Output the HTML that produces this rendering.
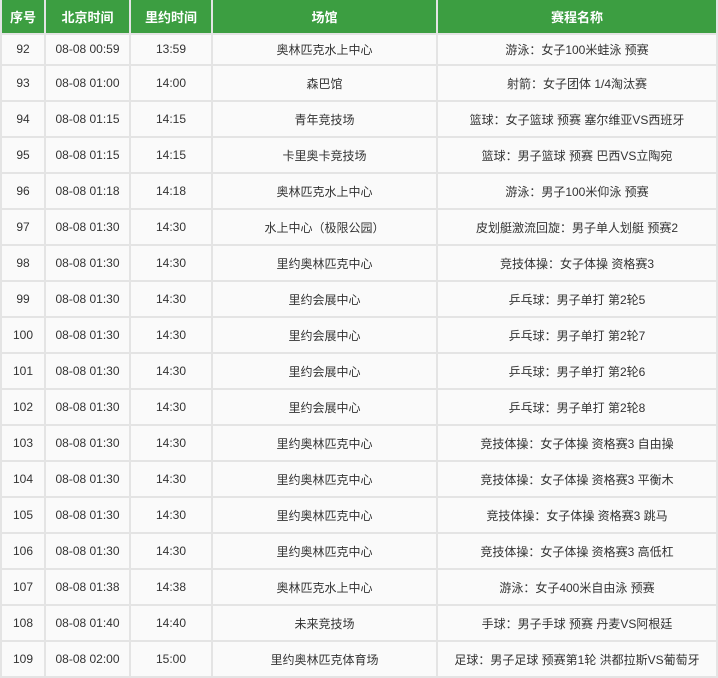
<!DOCTYPE html>
<html><head><meta charset="utf-8"><style>
html,body{margin:0;padding:0;background:#fff;width:718px;height:678px;overflow:hidden}
table{border-collapse:separate;border-spacing:2px;background:#e4e4e4;margin:-2px 0 0 0;table-layout:fixed;width:718px;font-family:"Liberation Sans","Noto Sans CJK SC",sans-serif;font-size:12px;color:#333}
th{background:#3c9e41;color:#fff;font-weight:bold;font-size:13px;height:33px;padding:0;text-align:center}
td{background:#fafafa;height:34px;padding:0;text-align:center;white-space:nowrap}
tr.f td{height:28px;padding-bottom:1px}
</style></head><body>
<table>
<colgroup><col style="width:42px"><col style="width:83px"><col style="width:80px"><col style="width:223px"><col style="width:278px"></colgroup>
<tr><th>序号</th><th>北京时间</th><th>里约时间</th><th>场馆</th><th>赛程名称</th></tr>
<tr class="f"><td>92</td><td>08-08 00:59</td><td>13:59</td><td>奥林匹克水上中心</td><td>游泳：女子100米蛙泳 预赛</td></tr>
<tr><td>93</td><td>08-08 01:00</td><td>14:00</td><td>森巴馆</td><td>射箭：女子团体 1/4淘汰赛</td></tr>
<tr><td>94</td><td>08-08 01:15</td><td>14:15</td><td>青年竞技场</td><td>篮球：女子篮球 预赛 塞尔维亚VS西班牙</td></tr>
<tr><td>95</td><td>08-08 01:15</td><td>14:15</td><td>卡里奥卡竞技场</td><td>篮球：男子篮球 预赛 巴西VS立陶宛</td></tr>
<tr><td>96</td><td>08-08 01:18</td><td>14:18</td><td>奥林匹克水上中心</td><td>游泳：男子100米仰泳 预赛</td></tr>
<tr><td>97</td><td>08-08 01:30</td><td>14:30</td><td>水上中心（极限公园）</td><td>皮划艇激流回旋：男子单人划艇 预赛2</td></tr>
<tr><td>98</td><td>08-08 01:30</td><td>14:30</td><td>里约奥林匹克中心</td><td>竞技体操：女子体操 资格赛3</td></tr>
<tr><td>99</td><td>08-08 01:30</td><td>14:30</td><td>里约会展中心</td><td>乒乓球：男子单打 第2轮5</td></tr>
<tr><td>100</td><td>08-08 01:30</td><td>14:30</td><td>里约会展中心</td><td>乒乓球：男子单打 第2轮7</td></tr>
<tr><td>101</td><td>08-08 01:30</td><td>14:30</td><td>里约会展中心</td><td>乒乓球：男子单打 第2轮6</td></tr>
<tr><td>102</td><td>08-08 01:30</td><td>14:30</td><td>里约会展中心</td><td>乒乓球：男子单打 第2轮8</td></tr>
<tr><td>103</td><td>08-08 01:30</td><td>14:30</td><td>里约奥林匹克中心</td><td>竞技体操：女子体操 资格赛3 自由操</td></tr>
<tr><td>104</td><td>08-08 01:30</td><td>14:30</td><td>里约奥林匹克中心</td><td>竞技体操：女子体操 资格赛3 平衡木</td></tr>
<tr><td>105</td><td>08-08 01:30</td><td>14:30</td><td>里约奥林匹克中心</td><td>竞技体操：女子体操 资格赛3 跳马</td></tr>
<tr><td>106</td><td>08-08 01:30</td><td>14:30</td><td>里约奥林匹克中心</td><td>竞技体操：女子体操 资格赛3 高低杠</td></tr>
<tr><td>107</td><td>08-08 01:38</td><td>14:38</td><td>奥林匹克水上中心</td><td>游泳：女子400米自由泳 预赛</td></tr>
<tr><td>108</td><td>08-08 01:40</td><td>14:40</td><td>未来竞技场</td><td>手球：男子手球 预赛 丹麦VS阿根廷</td></tr>
<tr><td>109</td><td>08-08 02:00</td><td>15:00</td><td>里约奥林匹克体育场</td><td>足球：男子足球 预赛第1轮 洪都拉斯VS葡萄牙</td></tr>
</table>
</body></html>
